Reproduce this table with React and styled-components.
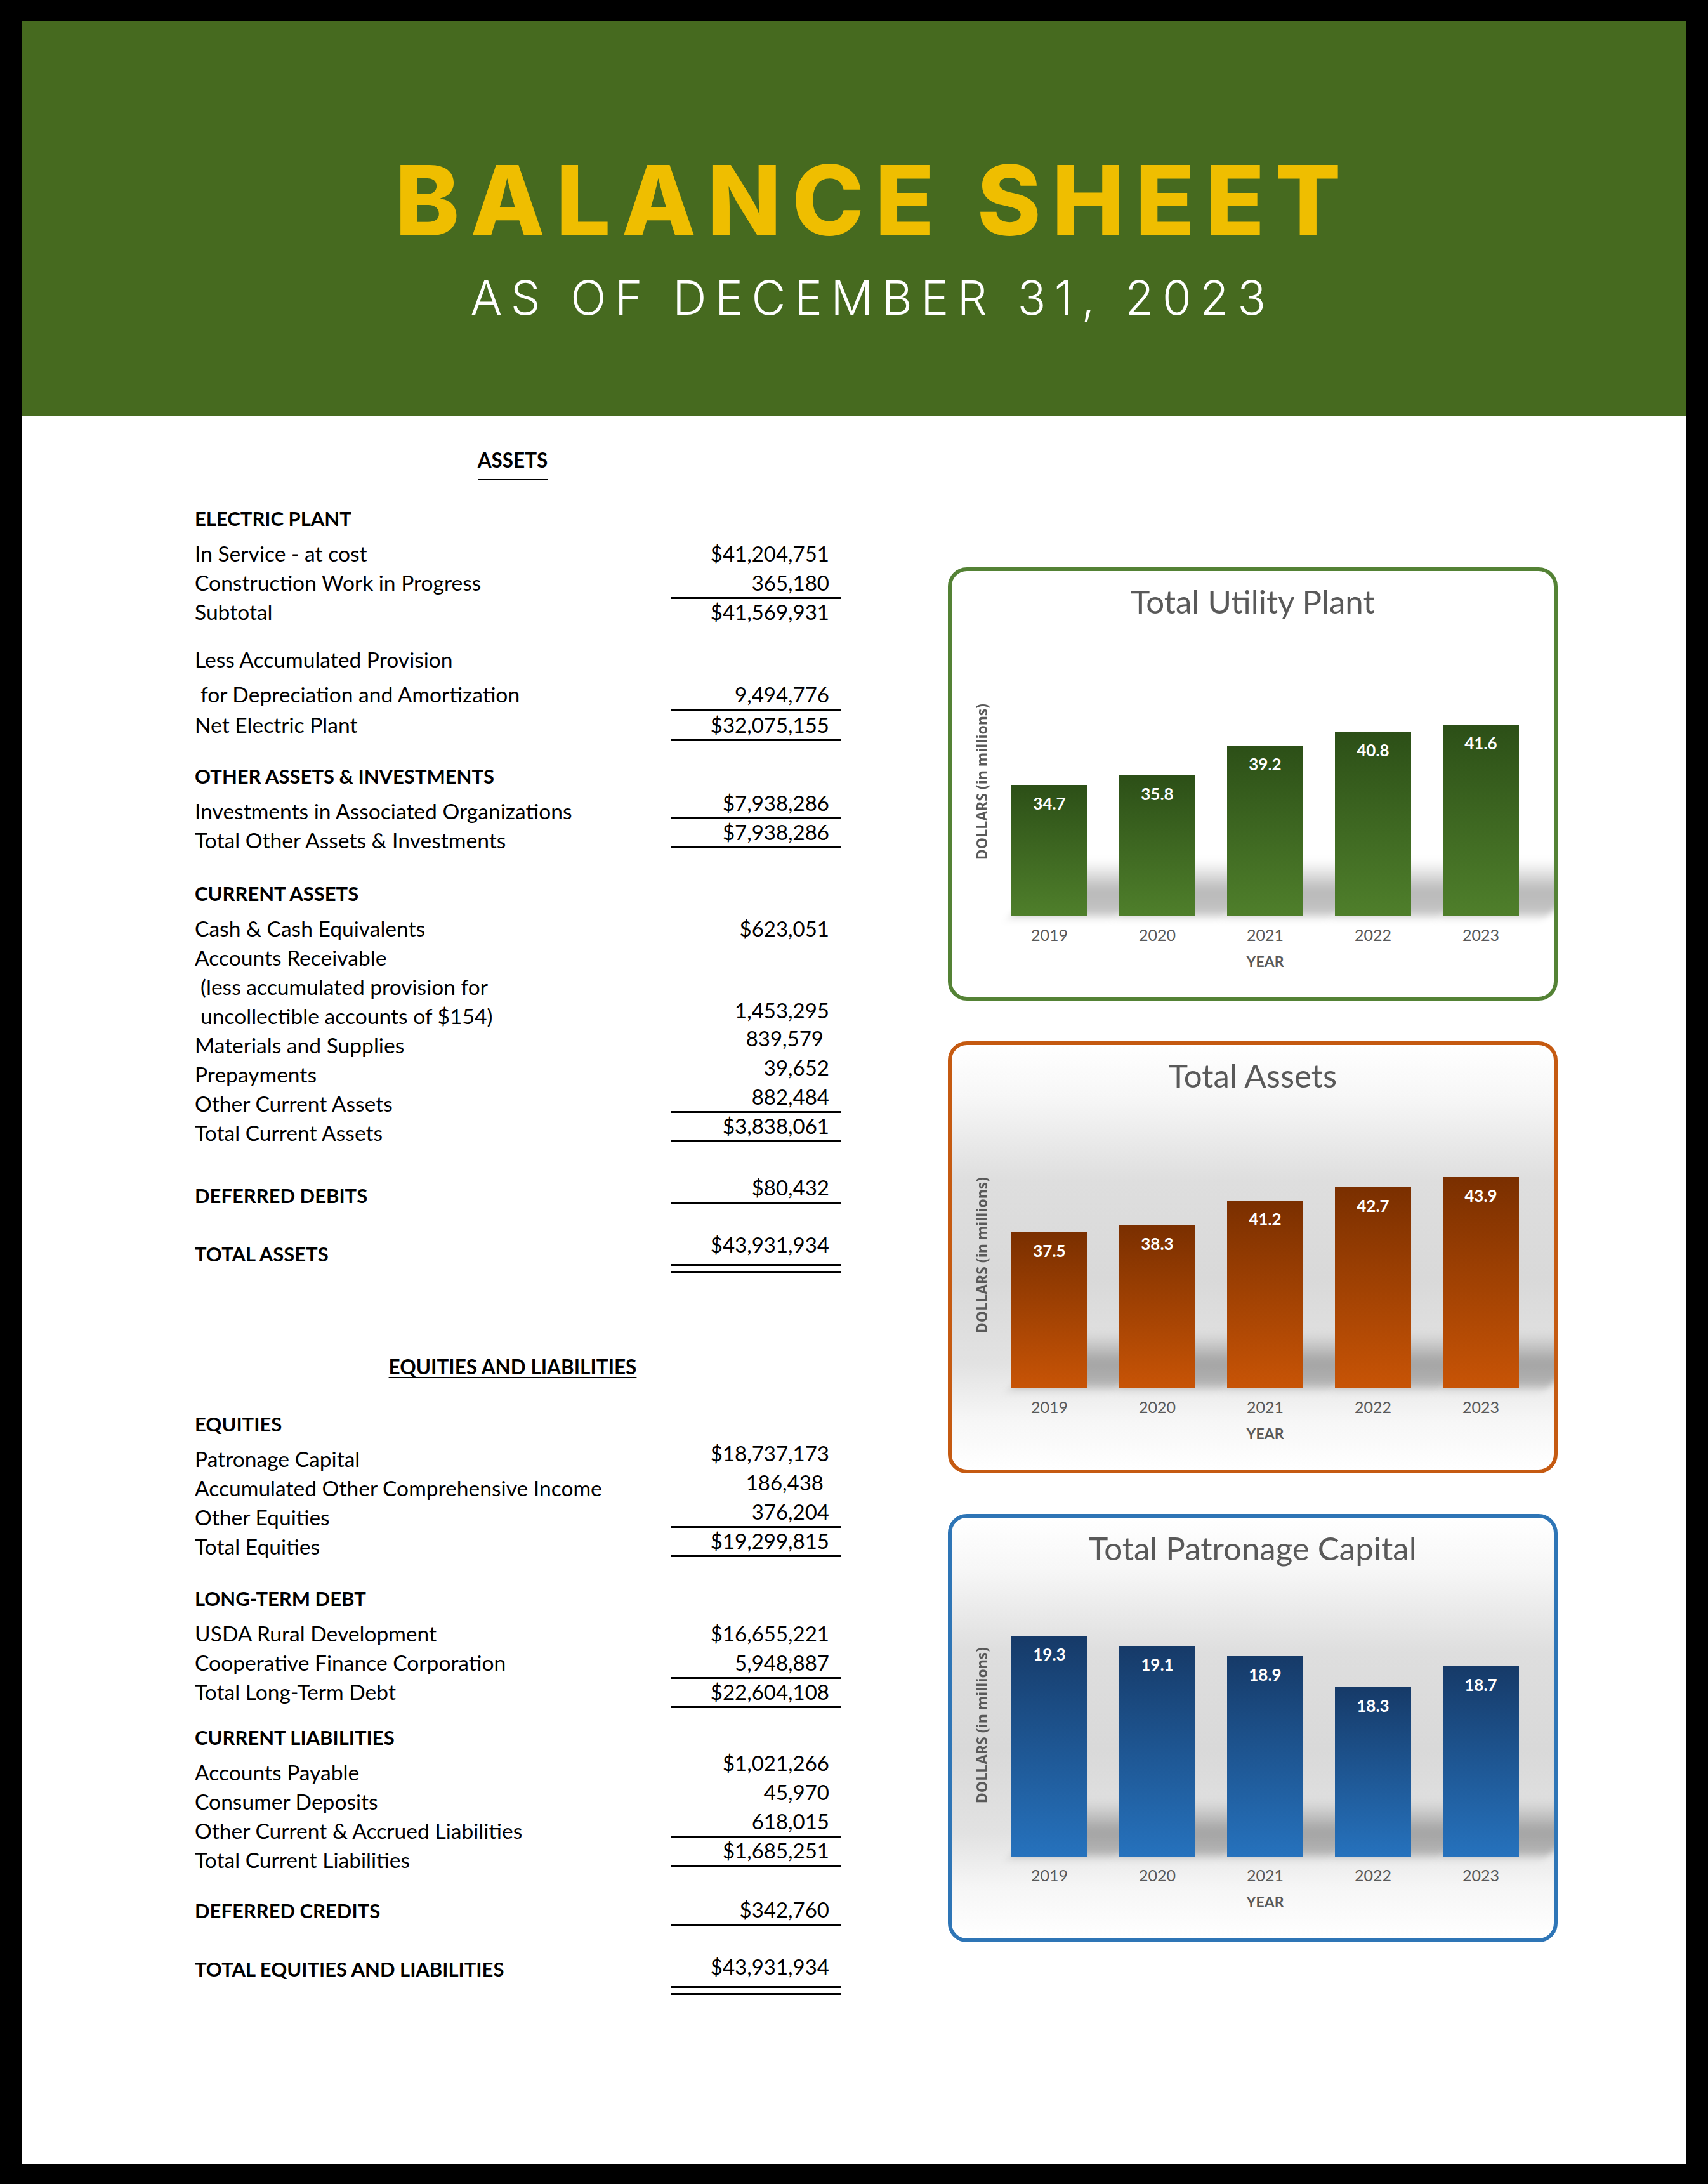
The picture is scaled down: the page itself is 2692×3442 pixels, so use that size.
import React from "react";
import styled, { createGlobalStyle } from "styled-components";

const GlobalStyle = createGlobalStyle`
  html, body {
    margin: 0;
    padding: 0;
    background: #000;
  }
  * {
    box-sizing: border-box;
  }
`;

const BODY_FONT = `Lato, "Liberation Sans", sans-serif`;

const assets = [
  {
    head: "ELECTRIC PLANT",
    space: 37,
    rows: [
      { label: "In Service - at cost", value: "$41,204,751" },
      { label: "Construction Work in Progress", value: "365,180", line: "single" },
      { label: "Subtotal", value: "$41,569,931" },
      { label: "Less Accumulated Provision", gap: 29 },
      { label: "for Depreciation and Amortization", indent: true, gap: 9, value: "9,494,776", line: "single" },
      { label: "Net Electric Plant", gap: 2, value: "$32,075,155", line: "single" },
    ],
  },
  {
    head: "OTHER ASSETS & INVESTMENTS",
    space: 35,
    rows: [
      { label: "Investments in Associated Organizations", value: "$7,938,286", lift: 13, line: "single" },
      { label: "Total Other Assets & Investments", value: "$7,938,286", lift: 13, line: "single" },
    ],
  },
  {
    head: "CURRENT ASSETS",
    space: 38,
    rows: [
      { label: "Cash & Cash Equivalents", value: "$623,051" },
      { label: "Accounts Receivable" },
      { label: "(less accumulated provision for", indent: true },
      { label: "uncollectible accounts of $154)", indent: true, value: "1,453,295", lift: 9 },
      { label: "Materials and Supplies", value: "839,579", lift: 11, pad: 9 },
      { label: "Prepayments", value: "39,652", lift: 11 },
      { label: "Other Current Assets", value: "882,484", lift: 11, line: "single" },
      { label: "Total Current Assets", value: "$3,838,061", lift: 11, line: "single" },
    ],
  },
  {
    space: 53,
    rows: [{ label: "DEFERRED DEBITS", bold: true, value: "$80,432", lift: 13, line: "single" }],
  },
  {
    space: 46,
    rows: [{ label: "TOTAL ASSETS", bold: true, value: "$43,931,934", lift: 15, line: "double" }],
  },
];

const equities = [
  {
    head: "EQUITIES",
    space: 44,
    rows: [
      { label: "Patronage Capital", value: "$18,737,173", lift: 9 },
      { label: "Accumulated Other Comprehensive Income", value: "186,438", lift: 9, pad: 9 },
      { label: "Other Equities", value: "376,204", lift: 9, line: "single" },
      { label: "Total Equities", value: "$19,299,815", lift: 9, line: "single" },
    ],
  },
  {
    head: "LONG-TERM DEBT",
    space: 36,
    rows: [
      { label: "USDA Rural Development", value: "$16,655,221" },
      { label: "Cooperative Finance Corporation", value: "5,948,887", line: "single" },
      { label: "Total Long-Term Debt", value: "$22,604,108", line: "single" },
    ],
  },
  {
    head: "CURRENT LIABILITIES",
    space: 26,
    rows: [
      { label: "Accounts Payable", value: "$1,021,266", lift: 15 },
      { label: "Consumer Deposits", value: "45,970", lift: 15 },
      { label: "Other Current & Accrued Liabilities", value: "618,015", lift: 15, line: "single" },
      { label: "Total Current Liabilities", value: "$1,685,251", lift: 15, line: "single" },
    ],
  },
  {
    space: 34,
    rows: [{ label: "DEFERRED CREDITS", bold: true, value: "$342,760", lift: 2, line: "single" }],
  },
  {
    space: 46,
    rows: [{ label: "TOTAL EQUITIES AND LIABILITIES", bold: true, value: "$43,931,934", lift: 4, line: "double" }],
  },
];

const charts = [
  {
    title: "Total Utility Plant",
    height: 683,
    plot: 467,
    border: "#548235",
    top: "#2c4f17",
    bottom: "#4f7f2b",
    shaded: false,
    min: 19.66,
    scale: 13.77,
    values: [34.7, 35.8, 39.2, 40.8, 41.6],
  },
  {
    title: "Total Assets",
    height: 681,
    plot: 464,
    border: "#c55a11",
    top: "#7a2f00",
    bottom: "#c85406",
    shaded: true,
    min: 19.4,
    scale: 13.6,
    values: [37.5, 38.3, 41.2, 42.7, 43.9],
  },
  {
    title: "Total Patronage Capital",
    height: 675,
    plot: 457,
    border: "#2e75b6",
    top: "#163a68",
    bottom: "#2672bd",
    shaded: true,
    min: 15,
    scale: 81,
    values: [19.3, 19.1, 18.9, 18.3, 18.7],
  },
];

const years = ["2019", "2020", "2021", "2022", "2023"];

export default function App() {
  return (
    <>
      <GlobalStyle />
      <Page>
        <Sheet>
          <Header>
            <Title>BALANCE SHEET</Title>
            <Subtitle>AS OF DECEMBER 31, 2023</Subtitle>
          </Header>
          <Content>
            <Table>
              <SectionTitle>
                <SectionText $rule>ASSETS</SectionText>
              </SectionTitle>
              <Groups groups={assets} />
              <SectionTitle $space={132}>
                <SectionText>EQUITIES AND LIABILITIES</SectionText>
              </SectionTitle>
              <Groups groups={equities} />
            </Table>
            <ChartColumn>
              {charts.map((c) => (
                <Chart key={c.title} chart={c} />
              ))}
            </ChartColumn>
          </Content>
        </Sheet>
      </Page>
    </>
  );
}

function Groups({ groups }) {
  return groups.map((g, i) => (
    <Group key={i} $space={g.space}>
      {g.head && <GroupHead>{g.head}</GroupHead>}
      {g.rows.map((r, j) => (
        <Row key={j} $gap={r.gap}>
          <Label $bold={r.bold} $indent={r.indent}>
            {r.label}
          </Label>
          {r.value ? (
            <Value $lift={r.lift} $pad={r.pad} $line={r.line}>
              {r.value}
            </Value>
          ) : (
            <span />
          )}
        </Row>
      ))}
    </Group>
  ));
}

function Chart({ chart }) {
  return (
    <ChartBox $height={chart.height} $border={chart.border} $shaded={chart.shaded}>
      <ChartTitle>{chart.title}</ChartTitle>
      <Plot $plot={chart.plot}>
        <AxisCell>
          <AxisLabel>DOLLARS (in millions)</AxisLabel>
        </AxisCell>
        <Bars>
          {chart.values.map((v, i) => (
            <BarCol key={years[i]}>
              <Bar
                $top={chart.top}
                $bottom={chart.bottom}
                style={{ height: `${Math.round((v - chart.min) * chart.scale)}px` }}
              >
                <BarValue>{v.toFixed(1)}</BarValue>
              </Bar>
              <Year>{years[i]}</Year>
            </BarCol>
          ))}
        </Bars>
        <AxisTitle>YEAR</AxisTitle>
      </Plot>
    </ChartBox>
  );
}

const Page = styled.div`
  width: 2692px;
  height: 3442px;
  padding: 33px 34px 32px 34px;
  background: #000;
`;

const Sheet = styled.div`
  height: 100%;
  background: #fff;
`;

const Header = styled.header`
  height: 622px;
  background: #466a1f;
  display: flex;
  flex-direction: column;
  align-items: center;
  padding-top: 206px;
  padding-left: 44px;
`;

const Title = styled.h1`
  margin: 0;
  padding-left: 17px;
  font-family: Inter, "Open Sans", sans-serif;
  font-weight: 800;
  font-size: 153px;
  line-height: 1;
  letter-spacing: 17px;
  color: #efbe00;
`;

const Subtitle = styled.div`
  margin-top: 40px;
  padding-left: 14px;
  font-family: Inter, "Open Sans", sans-serif;
  font-weight: 300;
  font-size: 74px;
  line-height: 1;
  letter-spacing: 13.5px;
  color: #fff;
`;

const Content = styled.main`
  display: grid;
  grid-template-columns: 1018px 961px;
  column-gap: 169px;
  padding-left: 273px;
`;

const Table = styled.section`
  padding-top: 47px;
  font-family: ${BODY_FONT};
  font-size: 33.6px;
  color: #000;
`;

const SectionTitle = styled.div`
  margin-top: ${(p) => p.$space || 0}px;
  padding-right: 16px;
  text-align: center;
`;

const SectionText = styled.span`
  display: inline-block;
  font-weight: 700;
  font-size: 31.5px;
  line-height: 46px;
  ${(p) =>
    p.$rule
      ? "padding-bottom: 7px; border-bottom: 2px solid #000;"
      : "text-decoration: underline; text-decoration-thickness: 2px; text-underline-offset: 4px;"}
`;

const Group = styled.div`
  margin-top: ${(p) => p.$space || 0}px;
`;

const GroupHead = styled.div`
  font-weight: 700;
  font-size: 31px;
  line-height: 46px;
  margin-bottom: 9px;
`;

const Row = styled.div`
  display: grid;
  grid-template-columns: 1fr 268px;
  margin-top: ${(p) => p.$gap || 0}px;
`;

const Label = styled.div`
  line-height: 46px;
  white-space: nowrap;
  font-weight: ${(p) => (p.$bold ? 700 : 400)};
  font-size: ${(p) => (p.$bold ? "31px" : "inherit")};
  padding-left: ${(p) => (p.$indent ? 9 : 0)}px;
`;

const Value = styled.div`
  position: relative;
  font-size: 33px;
  line-height: 46px;
  text-align: right;
  white-space: nowrap;
  padding-right: ${(p) => 18 + (p.$pad || 0)}px;
  margin-top: ${(p) => -(p.$lift || 0)}px;
  margin-bottom: ${(p) => p.$lift || 0}px;

  &::after {
    content: "";
    display: ${(p) => (p.$line ? "block" : "none")};
    position: absolute;
    left: 0;
    right: 0;
    top: 100%;
    margin-top: ${(p) => (p.$line === "double" ? 8 : 0)}px;
    height: ${(p) => (p.$line === "double" ? 8 : 3)}px;
    border-top: 3px solid #000;
    border-bottom: ${(p) => (p.$line === "double" ? "3px solid #000" : "none")};
  }
`;

const ChartColumn = styled.aside`
  display: flex;
  flex-direction: column;
  gap: 64px;
  padding-top: 239px;
`;

const ChartBox = styled.div`
  position: relative;
  isolation: isolate;
  height: ${(p) => p.$height}px;
  border: 6px solid ${(p) => p.$border};
  border-radius: 30px;
  padding-top: 19px;
  overflow: hidden;
  background: ${(p) =>
    p.$shaded
      ? "linear-gradient(to bottom, #ffffff 0%, #f7f7f7 12%, #dedede 32%, #d9d9d9 55%, #e2e2e2 75%, #f6f6f6 88%, #ffffff 100%)"
      : "#fff"};
  font-family: ${BODY_FONT};
`;

const ChartTitle = styled.div`
  text-align: center;
  font-size: 51px;
  line-height: 58px;
  color: #595959;
`;

const Plot = styled.div`
  display: grid;
  grid-template-columns: 94px 800px;
  grid-template-rows: ${(p) => p.$plot + 44}px auto;
`;

const AxisCell = styled.div`
  display: flex;
  align-items: center;
  justify-content: center;
`;

const AxisLabel = styled.div`
  writing-mode: vertical-rl;
  transform: rotate(180deg);
  white-space: nowrap;
  font-family: "Open Sans", sans-serif;
  font-weight: 700;
  font-size: 23px;
  color: #595959;
`;

const Bars = styled.div`
  display: flex;
  gap: 50px;
  align-items: flex-end;
`;

const BarCol = styled.div`
  display: flex;
  flex-direction: column;
  width: 120px;
`;

const Bar = styled.div`
  position: relative;
  background: linear-gradient(to bottom, ${(p) => p.$top}, ${(p) => p.$bottom});

  &::before {
    content: "";
    position: absolute;
    left: 0;
    bottom: 0;
    width: 140%;
    height: 88px;
    background: linear-gradient(
      to top,
      rgba(0, 0, 0, 0.22) 0%,
      rgba(0, 0, 0, 0.28) 45%,
      rgba(0, 0, 0, 0) 100%
    );
    transform-origin: bottom left;
    transform: skewX(-42deg);
    filter: blur(7px);
    z-index: -1;
  }
`;

const BarValue = styled.div`
  padding-top: 14px;
  text-align: center;
  font-weight: 700;
  font-size: 26px;
  line-height: 30px;
  color: #fff;
`;

const Year = styled.div`
  margin-top: 15px;
  text-align: center;
  font-size: 25px;
  line-height: 29px;
  color: #595959;
`;

const AxisTitle = styled.div`
  grid-column: 2;
  margin-top: 14px;
  text-align: center;
  font-weight: 700;
  font-size: 23px;
  line-height: 26px;
  color: #595959;
`;
